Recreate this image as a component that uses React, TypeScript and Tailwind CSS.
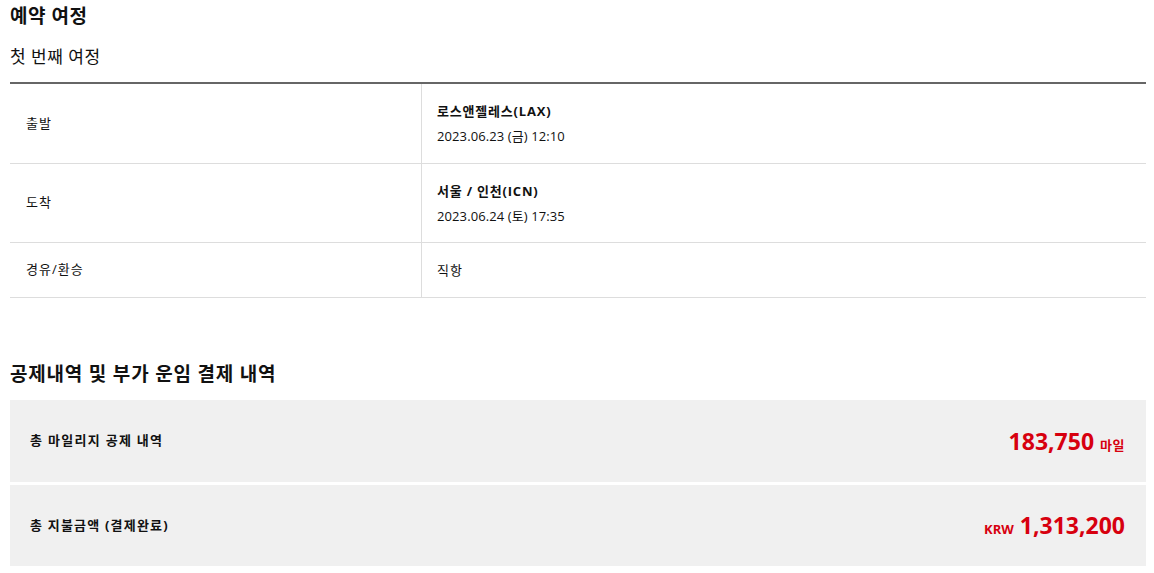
import React from 'react';

const font = {fontFamily: '"Open Sans", "Noto Sans CJK KR", sans-serif'};

interface Row {
    label: string
    title?: string
    sub?: string
    text?: string
    h: string
}

const rows: Row[] = [
    {label: '출발', title: '로스앤젤레스(LAX)', sub: '2023.06.23 (금) 12:10', h: 'h-[80px]'},
    {label: '도착', title: '서울 / 인천(ICN)', sub: '2023.06.24 (토) 17:35', h: 'h-[79px]'},
    {label: '경유/환승', text: '직항', h: 'h-[55px]'},
];

export default function App() {
    return (
        <div className="w-[1154px] h-[573px] bg-white text-[#111] pl-[10px] pr-[8px] overflow-hidden" style={font}>
            <h2 className="text-[19px] font-bold leading-[24px] pt-[4px] tracking-[0.5px]">예약 여정</h2>
            <p className="text-[17px] leading-[22px] mt-[18px] tracking-[0.5px]">첫 번째 여정</p>

            <div className="mt-[14px] border-t-2 border-[#666]">
                {rows.map(r => (
                    <div key={r.label} className={`flex border-b border-[#ddd] ${r.h}`}>
                        <div className="w-[412px] border-r border-[#ddd] flex items-center pl-[16px] text-[13px] tracking-[1px]">
                            {r.label}
                        </div>
                        <div className="flex-1 flex flex-col justify-center pl-[15px] text-[13px]">
                            {r.title ? (
                                <>
                                    <p className="font-bold leading-[18px] tracking-[0.8px]">{r.title}</p>
                                    <p className="leading-[18px] mt-[7px] tracking-[0.1px]">{r.sub}</p>
                                </>
                            ) : (
                                <p className="leading-[18px] tracking-[1px]">{r.text}</p>
                            )}
                        </div>
                    </div>
                ))}
            </div>

            <h2 className="text-[19px] font-bold leading-[24px] mt-[64px] tracking-[0.8px]">공제내역 및 부가 운임 결제 내역</h2>

            <div className="mt-[14px] flex flex-col gap-[3px]">
                <div className="h-[82px] bg-[#f0f0f0] flex items-center justify-between pl-[20px] pr-[21px]">
                    <span className="text-[13px] font-bold tracking-[1.3px]">총 마일리지 공제 내역</span>
                    <span className="text-[#d7000f] font-bold flex items-baseline gap-[6px]">
                        <span className="text-[23px]">183,750</span>
                        <span className="text-[13px] tracking-[0.5px]">마일</span>
                    </span>
                </div>
                <div className="h-[81px] bg-[#f0f0f0] flex items-center justify-between pl-[20px] pr-[21px]">
                    <span className="text-[13px] font-bold tracking-[1.2px]">총 지불금액 (결제완료)</span>
                    <span className="text-[#d7000f] font-bold flex items-baseline gap-[6px]">
                        <span className="text-[13px]">KRW</span>
                        <span className="text-[23px]">1,313,200</span>
                    </span>
                </div>
            </div>
        </div>
    )
}
